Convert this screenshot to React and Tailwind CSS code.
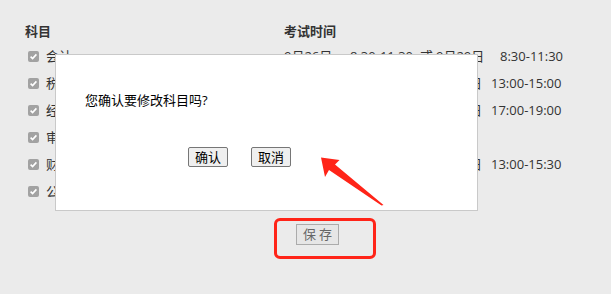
import React from "react";

const rows = [
  { name: "会计", first: true },
  { name: "税法", prefix: "9月27日 13:00-15:00 或 9月30日", time: "13:00-15:00" },
  { name: "经济法", prefix: "9月27日 17:00-19:00 或 9月30日", time: "17:00-19:00" },
  { name: "审计", prefix: "9月26日 13:00-15:30", time: "" },
  { name: "财务成本管理", prefix: "9月27日 8:30-11:30 或 9月30日", time: "13:00-15:30" },
  { name: "公司战略与风险管理", prefix: "9月27日 8:30-10:30", time: "" },
];

function Check() {
  return (
    <span className="inline-flex items-center justify-center w-[11px] h-[11px] rounded-[2px] bg-[#a2a2a2] ml-[3px] mr-[7px] shrink-0">
      <svg width="9" height="9" viewBox="0 0 9 9">
        <path d="M1.6 4.6 L3.6 6.6 L7.4 2.4" stroke="white" strokeWidth="1.6" fill="none" />
      </svg>
    </span>
  );
}

function Time({ r }) {
  if (r.first) {
    return (
      <div className="flex whitespace-nowrap">
        <span className="w-[66px]">9月26日</span>
        <span className="w-[70px]">8:30-11:30</span>
        <span className="w-[16px]">或</span>
        <span className="w-[64px]">9月29日</span>
        <span>8:30-11:30</span>
      </div>
    );
  }
  if (!r.time) {
    return <div className="whitespace-nowrap">{r.prefix}</div>;
  }
  return (
    <div className="flex whitespace-nowrap">
      <span className="w-[198px] text-right">{r.prefix}</span>
      <span className="ml-[9px]">{r.time}</span>
    </div>
  );
}

export default function App() {
  return (
    <div
      className="relative w-[611px] h-[294px] overflow-hidden bg-[#ebebeb] text-[13px] text-[#333]"
      style={{ fontFamily: '"Open Sans", "Noto Sans CJK SC", sans-serif' }}
    >
      <div className="pl-[25px] pt-[20px]">
        <div className="grid grid-cols-[259px_1fr] h-[23px] items-center font-bold">
          <div>科目</div>
          <div>考试时间</div>
        </div>
        {rows.map((r) => (
          <div key={r.name} className="grid grid-cols-[259px_1fr] h-[27px] items-center">
            <div className="flex items-center">
              <Check />
              <span>{r.name}</span>
            </div>
            <Time r={r} />
          </div>
        ))}
        <div className="pl-[271px] pt-[19px]">
          <button className="w-[43px] h-[21px] border border-[#ababab] bg-[#e6e6e6] text-[#666] text-[13px] tracking-[3px] leading-none pl-[3px]">
            保存
          </button>
        </div>
      </div>

      {/* dialog */}
      <div className="absolute left-[55px] top-[54px] w-[423px] h-[157px] bg-white border border-[#c9c9c9]">
        <div className="pl-[29px] pt-[35px] text-black text-[13px] leading-[20px]">您确认要修改科目吗?</div>
        <div className="flex gap-[23px] pl-[132px] pt-[37px]">
          <button className="w-[40px] h-[20px] border border-[#767676] bg-[#efefef] text-black text-[13px] leading-none rounded-[2px]">
            确认
          </button>
          <button className="w-[40px] h-[20px] border border-[#767676] bg-[#efefef] text-black text-[13px] leading-none rounded-[2px]">
            取消
          </button>
        </div>
      </div>

      {/* annotation box */}
      <div className="absolute left-[274px] top-[218px] w-[102px] h-[41px] border-[3px] border-[#ff2418] rounded-[6px]" />

      {/* annotation arrow */}
      <svg className="absolute left-0 top-0" width="611" height="294" viewBox="0 0 611 294">
        <polygon
          points="321,157.5 339.5,160 335,164.5 383.5,205 381.5,205.5 329,170 325,177"
          fill="#ff2418"
        />
      </svg>
    </div>
  );
}
